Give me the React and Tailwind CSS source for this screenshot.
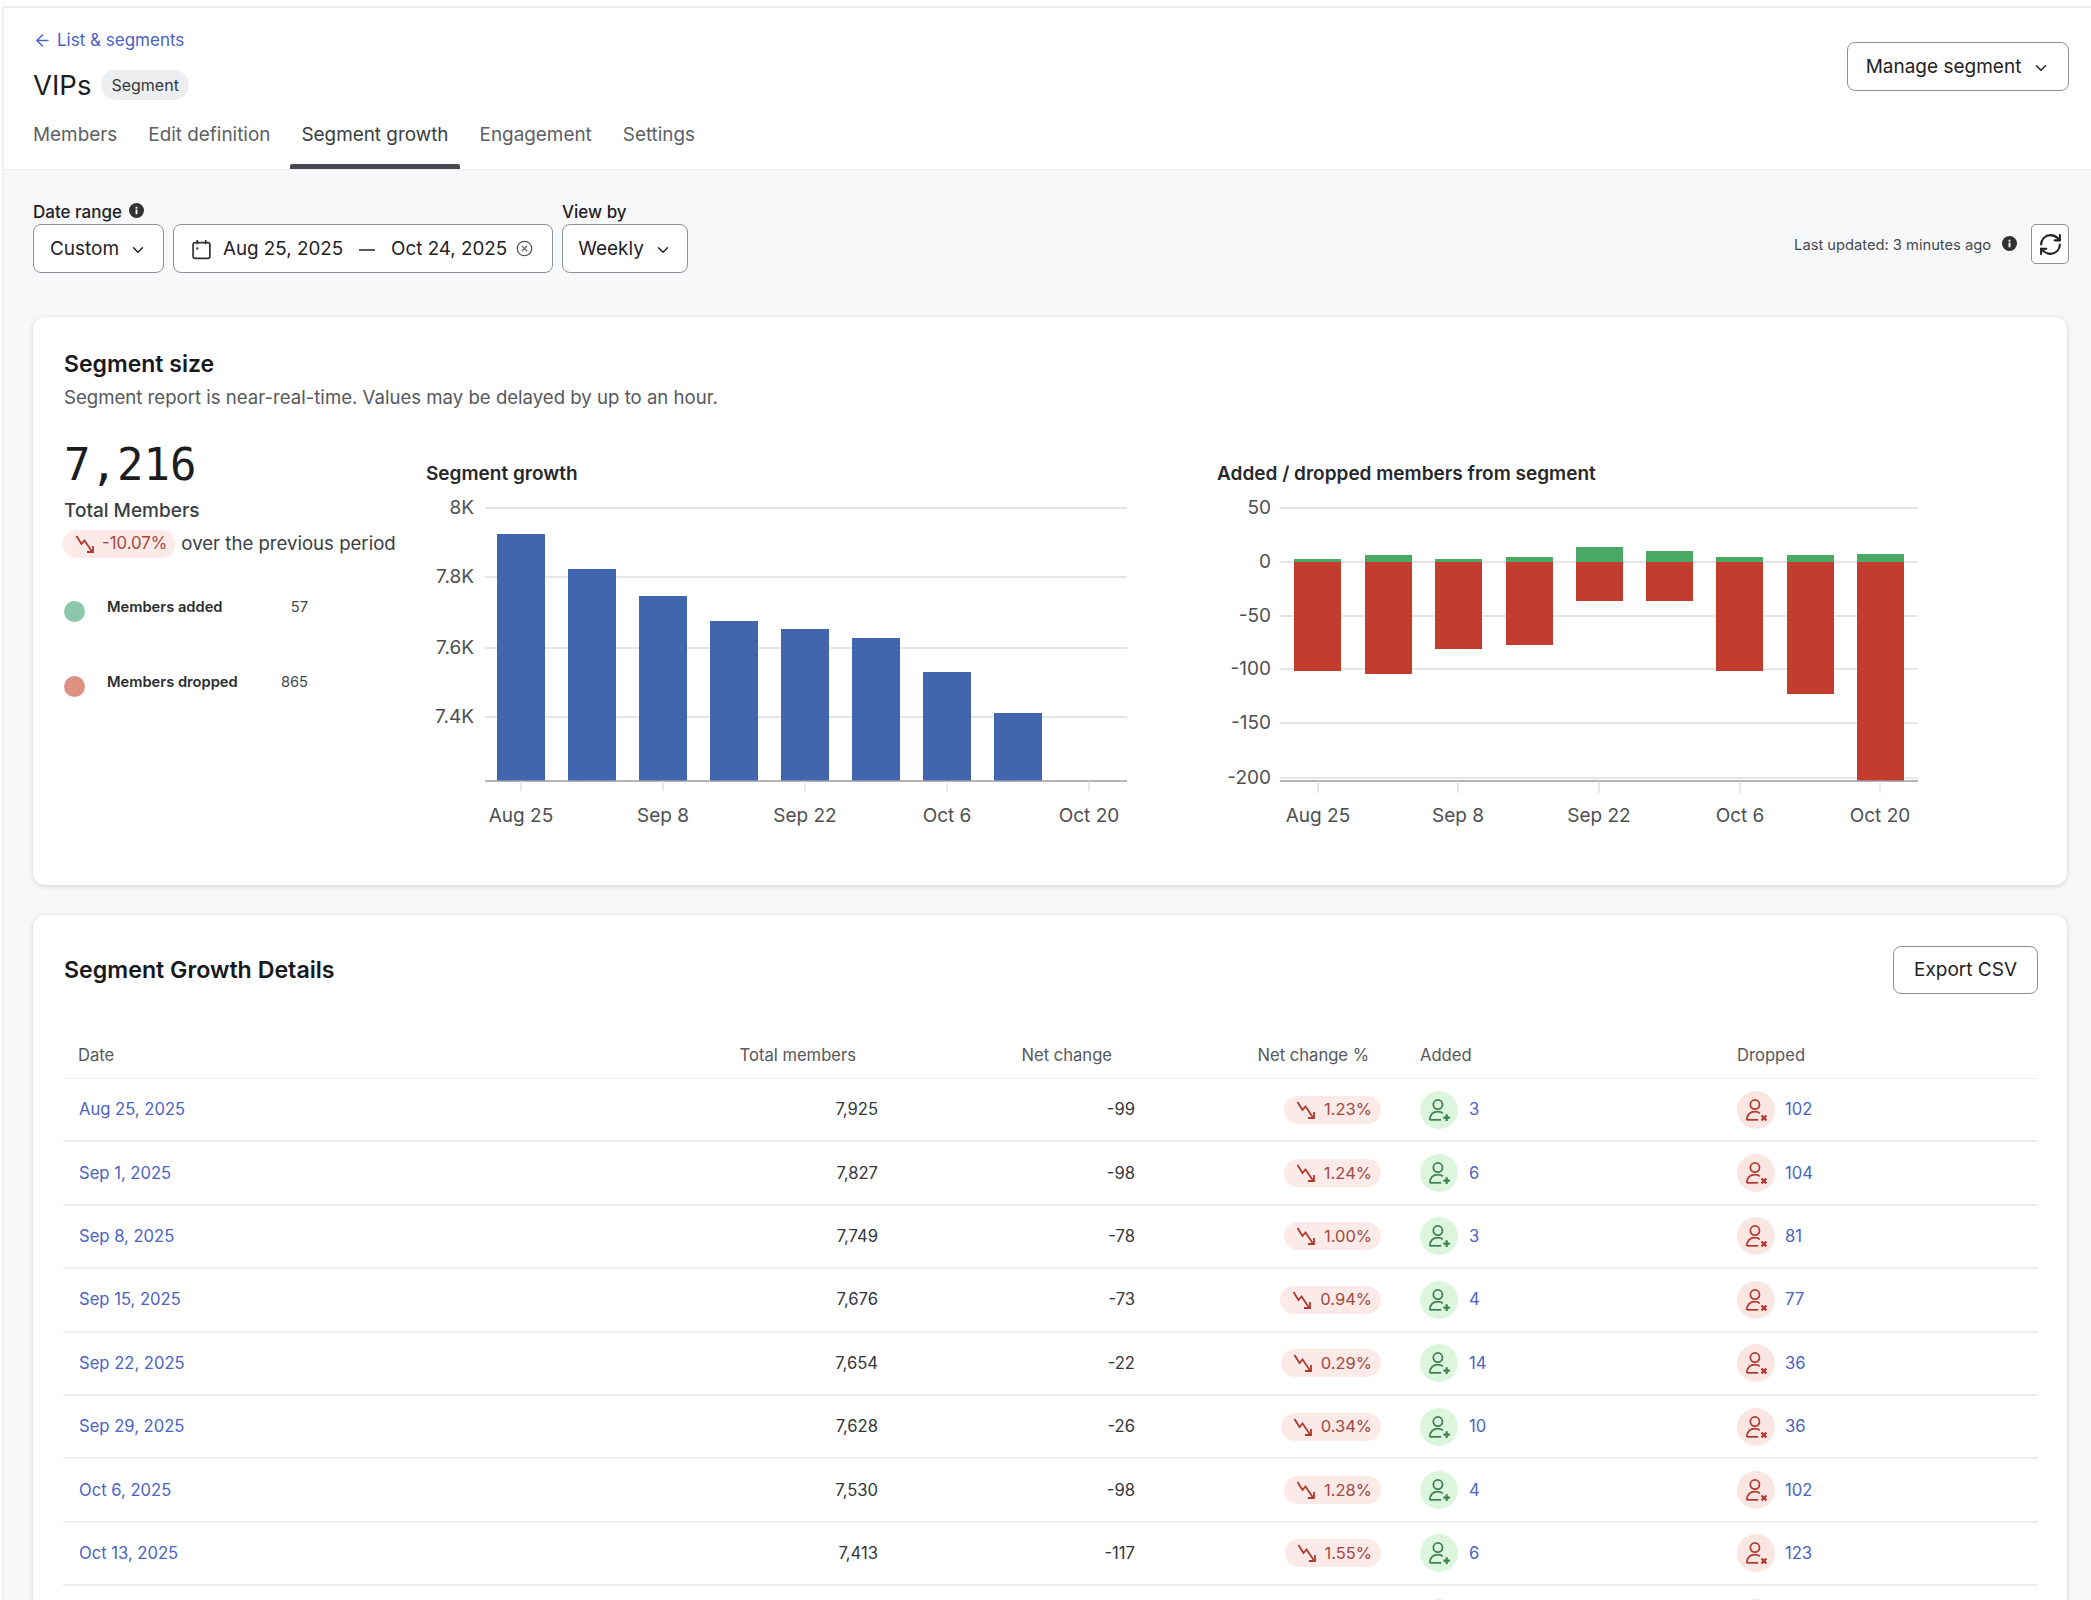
import React from "react";
import { ArrowLeft, ChevronDown, RefreshCw } from "lucide-react";

const rows = [
    { date: "Aug 25, 2025", total: "7,925", net: "-99", pct: "1.23%", added: 3, dropped: 102 },
    { date: "Sep 1, 2025", total: "7,827", net: "-98", pct: "1.24%", added: 6, dropped: 104 },
    { date: "Sep 8, 2025", total: "7,749", net: "-78", pct: "1.00%", added: 3, dropped: 81 },
    { date: "Sep 15, 2025", total: "7,676", net: "-73", pct: "0.94%", added: 4, dropped: 77 },
    { date: "Sep 22, 2025", total: "7,654", net: "-22", pct: "0.29%", added: 14, dropped: 36 },
    { date: "Sep 29, 2025", total: "7,628", net: "-26", pct: "0.34%", added: 10, dropped: 36 },
    { date: "Oct 6, 2025", total: "7,530", net: "-98", pct: "1.28%", added: 4, dropped: 102 },
    { date: "Oct 13, 2025", total: "7,413", net: "-117", pct: "1.55%", added: 6, dropped: 123 },
];

const growthBars = [
    [497, 533],
    [568, 568],
    [639, 595],
    [710, 620],
    [781, 628],
    [852, 637],
    [923, 671],
    [994, 712],
];

const changeBars = [
    [1294, 558, 670],
    [1365, 554, 673],
    [1435, 558, 648],
    [1506, 556, 644],
    [1576, 546, 600],
    [1646, 550, 600],
    [1716, 556, 670],
    [1787, 554, 693],
    [1857, 553, 780],
];

function InfoDot({ className }) {
    return (
        <svg viewBox="0 0 16 16" className={className}>
            <circle cx="8" cy="8" r="8" fill="#2f3133" />
            <rect x="7" y="7" width="2" height="5" fill="#fff" />
            <rect x="7" y="4" width="2" height="2" fill="#fff" />
        </svg>
    );
}

function TrendIcon() {
    return (
        <svg viewBox="0 0 20 20" fill="none" stroke="#b03a30" strokeWidth="1.8" className="w-[20px] h-[20px] shrink-0">
            <path d="M1.5 2 L6.5 10 L9.5 6.5 L17 17.5" />
            <path d="M12 18 H18 V12" />
        </svg>
    );
}

function ChangePill({ value }) {
    return (
        <span className="inline-flex items-center gap-[8px] h-[28px] pl-[12px] pr-[9px] rounded-full bg-[#fbeae7] text-[#a2493f] text-[16.5px]">
            <TrendIcon />
            {value}
        </span>
    );
}

function PersonBadge({ type }) {
    const added = type === "added";
    const color = added ? "#3f7f52" : "#b03a30";
    return (
        <span className={"w-[38px] h-[38px] rounded-full flex items-center justify-center shrink-0 " + (added ? "bg-[#dcf6dd]" : "bg-[#f9e6e3]")}>
            <svg viewBox="0 0 22 22" fill="none" stroke={color} strokeWidth="1.6" className="w-[24px] h-[24px]">
                <circle cx="10" cy="6" r="4.2" />
                <path d="M2.5 20 C3 15 6 12.5 10 12.5 C12 12.5 13.5 13 14.5 14" />
                <path d="M2.5 20 H13" />
                {added ? (
                    <path d="M18 15 V21 M15 18 H21" strokeWidth="2" />
                ) : (
                    <path d="M16 16 L20.5 20.5 M20.5 16 L16 20.5" strokeWidth="2" />
                )}
            </svg>
        </span>
    );
}

function SegmentGrowthChart() {
    const lines = [
        [507, "8K"],
        [576, "7.8K"],
        [647, "7.6K"],
        [716, "7.4K"],
    ];
    const ticks = [
        [521, "Aug 25"],
        [663, "Sep 8"],
        [805, "Sep 22"],
        [947, "Oct 6"],
        [1089, "Oct 20"],
    ];
    return (
        <svg viewBox="426 490 704 340" className="w-[704px] h-[340px] mt-[5px] block">
            {lines.map(([y, label]) => (
                <g key={label}>
                    <line x1="485" x2="1127" y1={y} y2={y} stroke="#dcdee0" strokeWidth="1.5" />
                    <text x="474" y={y + 6} textAnchor="end" fontSize="19" fill="#4d4f52">
                        {label}
                    </text>
                </g>
            ))}
            {growthBars.map(([x, top]) => (
                <rect key={x} x={x} y={top} width="48" height={780 - top} fill="#4166ae" />
            ))}
            <line x1="485" x2="1127" y1="780" y2="780" stroke="#9a9da0" strokeWidth="1.5" />
            {ticks.map(([x, label]) => (
                <g key={label}>
                    <line x1={x} x2={x} y1="780" y2="790" stroke="#d0d2d4" strokeWidth="1" />
                    <text x={x} y="821" textAnchor="middle" fontSize="19" fill="#4d4f52">
                        {label}
                    </text>
                </g>
            ))}
        </svg>
    );
}

function AddedDroppedChart() {
    const lines = [
        [507, "50"],
        [561, "0"],
        [615, "-50"],
        [668, "-100"],
        [722, "-150"],
        [777, "-200"],
    ];
    const ticks = [
        [1318, "Aug 25"],
        [1458, "Sep 8"],
        [1599, "Sep 22"],
        [1740, "Oct 6"],
        [1880, "Oct 20"],
    ];
    return (
        <svg viewBox="1217 490 708 340" className="w-[708px] h-[340px] mt-[5px] block">
            {lines.map(([y, label]) => (
                <g key={label}>
                    <line x1="1280" x2="1918" y1={y} y2={y} stroke="#dcdee0" strokeWidth="1.5" />
                    <text x="1271" y={y + 6} textAnchor="end" fontSize="19" fill="#4d4f52">
                        {label}
                    </text>
                </g>
            ))}
            {changeBars.map(([x, top, bottom]) => (
                <g key={x}>
                    <rect x={x} y={top} width="47" height={561 - top} fill="#4aa864" />
                    <rect x={x} y="561" width="47" height={bottom - 561} fill="#c33d2f" />
                </g>
            ))}
            <line x1="1280" x2="1918" y1="780" y2="780" stroke="#9a9da0" strokeWidth="1.5" />
            {ticks.map(([x, label]) => (
                <g key={label}>
                    <line x1={x} x2={x} y1="780" y2="792" stroke="#d0d2d4" strokeWidth="1" />
                    <text x={x} y="821" textAnchor="middle" fontSize="19" fill="#4d4f52">
                        {label}
                    </text>
                </g>
            ))}
        </svg>
    );
}

export default function App() {
    return (
        <div className="h-[1600px] overflow-hidden bg-white pt-[6px] pl-[2px] font-['Inter',sans-serif] text-[#1f2124]">
            <div className="h-full border-t-2 border-l-2 border-[#eceef0] bg-[#f7f8fa]">
                {/* header */}
                <div className="relative h-[162px] bg-white border-b border-[#e9ebed] pl-[29px]">
                    <div className="pt-[21px] flex items-center gap-[5px] text-[#4a63c4] text-[17px] leading-[22px]">
                        <ArrowLeft size={19} strokeWidth={1.8} />
                        List &amp; segments
                    </div>
                    <div className="mt-[17px] flex items-center gap-[10px]">
                        <span className="text-[27.5px] leading-[34px] text-[#1b1d20]">VIPs</span>
                        <span className="h-[30px] px-[10px] rounded-full bg-[#eceeef] text-[16px] leading-[30px] text-[#33363a]">Segment</span>
                    </div>
                    <div className="mt-[20px] flex text-[18.9px] leading-[26px] text-[#5c5f63]">
                        <span className="mr-[31px]">Members</span>
                        <span className="mr-[31px]">Edit definition</span>
                        <span className="mr-[31px] text-[#3a3d41]">Segment growth</span>
                        <span className="mr-[31px]">Engagement</span>
                        <span>Settings</span>
                    </div>
                    <div className="absolute left-[286px] bottom-0 w-[170px] h-[5px] rounded-t-[2px] bg-[#45484c]"></div>
                    <button className="absolute right-[22px] top-[34px] h-[49px] w-[222px] pt-[2px] flex items-center justify-center gap-[11px] rounded-[8px] border border-[#8d9094] bg-white text-[19px]">
                        Manage segment
                        <ChevronDown size={18} strokeWidth={2} />
                    </button>
                </div>

                {/* filters */}
                <div className="h-[147px] pl-[29px] pr-[22px] pt-[30px] flex items-start">
                    <div>
                        <div className="flex items-center gap-[7px] text-[17px] leading-[24px] font-medium h-[24px]">
                            Date range
                            <InfoDot className="w-[15px] h-[15px] -mt-[3px]" />
                        </div>
                        <div className="flex gap-[9px]">
                            <div className="w-[131px] h-[49px] pt-[2px] flex items-center justify-center gap-[10px] rounded-[8px] border border-[#8d9094] bg-white text-[19px]">
                                Custom
                                <ChevronDown size={18} strokeWidth={2} />
                            </div>
                            <div className="w-[380px] h-[49px] pt-[2px] flex items-center pl-[17px] rounded-[8px] border border-[#8d9094] bg-white text-[18.8px]">
                                <svg viewBox="0 0 20 20" fill="none" stroke="#2f3133" strokeWidth="1.6" className="w-[21px] h-[21px] shrink-0">
                                    <rect x="2" y="3.5" width="16" height="15" rx="2" />
                                    <path d="M6 1 V5 M14 1 V5" />
                                    <rect x="5" y="8" width="2" height="2" fill="#2f3133" stroke="none" />
                                </svg>
                                <span className="ml-[11px]">Aug 25, 2025</span>
                                <span className="ml-[16px] w-[16px] h-[2px] bg-[#55585c]"></span>
                                <span className="ml-[16px]">Oct 24, 2025</span>
                                <svg viewBox="0 0 16 16" fill="none" stroke="#55585c" strokeWidth="1.2" className="w-[17px] h-[17px] ml-[9px] -mt-[2px] shrink-0">
                                    <circle cx="8" cy="8" r="6.8" />
                                    <path d="M5.5 5.5 L10.5 10.5 M10.5 5.5 L5.5 10.5" />
                                </svg>
                            </div>
                        </div>
                    </div>
                    <div className="ml-[9px]">
                        <div className="text-[17px] leading-[24px] h-[24px] font-medium">View by</div>
                        <div className="w-[126px] h-[49px] pt-[2px] flex items-center justify-center gap-[10px] rounded-[8px] border border-[#8d9094] bg-white text-[19px]">
                            Weekly
                            <ChevronDown size={18} strokeWidth={2} />
                        </div>
                    </div>
                    <div className="ml-auto pt-[24px] flex items-center h-[64px]">
                        <span className="text-[14.7px] text-[#45484c] pt-[2px]">Last updated: 3 minutes ago</span>
                        <InfoDot className="w-[15px] h-[15px] ml-[11px] -mt-[2px]" />
                        <span className="ml-[14px] w-[38px] h-[40px] flex items-center justify-center rounded-[5px] border border-[#8d9094] bg-white">
                            <RefreshCw size={25} strokeWidth={2} />
                        </span>
                    </div>
                </div>

                {/* segment size card */}
                <div className="ml-[29px] mr-[24px] h-[568px] rounded-[12px] bg-white shadow-[0_1px_5px_rgba(0,0,0,0.16)] pt-[30px] pl-[31px]">
                    <div className="text-[23px] leading-[34px] font-semibold text-[#17191c]">Segment size</div>
                    <div className="text-[18.6px] leading-[26px] mt-[3px] text-[#55585c]">
                        Segment report is near-real-time. Values may be delayed by up to an hour.
                    </div>
                    <div className="flex mt-[25px]">
                        <div className="w-[362px] shrink-0">
                            <div className="font-['DejaVu_Sans_Mono',monospace] text-[44px] leading-[60px] text-[#1b1d20]">7,216</div>
                            <div className="mt-[4px] text-[19px] leading-[24px] font-medium text-[#3a3d41]">Total Members</div>
                            <div className="mt-[7px] flex items-center gap-[6px] -ml-[1px]">
                                <span className="inline-flex items-center gap-[7px] h-[28px] pl-[12px] pr-[8px] rounded-full bg-[#fbeae7] text-[#a2493f] text-[16.8px]">
                                    <TrendIcon />
                                    -10.07%
                                </span>
                                <span className="text-[18.6px] text-[#3a3d41]">over the previous period</span>
                            </div>
                            <div className="mt-[39px] flex w-[244px] h-[20px] text-[14.7px] leading-[20px]">
                                <span className="w-[21px] h-[21px] mt-[4px] rounded-full bg-[#8cc7ad]"></span>
                                <span className="ml-[22px] font-semibold text-[#2a2c2f]">Members added</span>
                                <span className="ml-auto text-[#45484c]">57</span>
                            </div>
                            <div className="mt-[55px] flex w-[244px] h-[20px] text-[14.7px] leading-[20px]">
                                <span className="w-[21px] h-[21px] mt-[4px] rounded-full bg-[#dc9183]"></span>
                                <span className="ml-[22px] font-semibold text-[#2a2c2f]">Members dropped</span>
                                <span className="ml-auto text-[#45484c]">865</span>
                            </div>
                        </div>
                        <div className="w-[791px] shrink-0 pt-[27px]">
                            <div className="text-[19px] leading-[24px] font-semibold text-[#26282b]">Segment growth</div>
                            <SegmentGrowthChart />
                        </div>
                        <div className="w-[708px] shrink-0 pt-[27px]">
                            <div className="text-[19px] leading-[24px] font-semibold text-[#26282b]">Added / dropped members from segment</div>
                            <AddedDroppedChart />
                        </div>
                    </div>
                </div>

                {/* details card */}
                <div className="ml-[29px] mr-[24px] mt-[30px] rounded-[12px] bg-white shadow-[0_1px_5px_rgba(0,0,0,0.16)] pt-[31px] pl-[30px] pr-[29px] pb-[20px]">
                    <div className="flex items-center justify-between pl-[1px]">
                        <div className="text-[23.2px] font-semibold text-[#17191c]">Segment Growth Details</div>
                        <button className="w-[145px] h-[48px] pt-[1px] rounded-[8px] border border-[#8d9094] bg-white text-[19px]">Export CSV</button>
                    </div>
                    <div className="mt-[38px] grid grid-cols-[600px_231px_257px_253px_317px_1fr] h-[47px] items-center border-b border-[#eceef0] text-[16.6px] text-[#55585c]">
                        <div className="pl-[15px]">Date</div>
                        <div className="text-right pr-[38px]">Total members</div>
                        <div className="text-right pr-[39px]">Net change</div>
                        <div className="text-right pr-[35px]">Net change %</div>
                        <div className="pl-[16px]">Added</div>
                        <div className="pl-[16px]">Dropped</div>
                    </div>
                    {rows.map((row) => (
                        <div key={row.date} className="grid grid-cols-[600px_231px_257px_253px_317px_1fr] h-[63.4px] items-center border-b-2 border-[#eceef0] text-[16.6px]">
                            <div className="pl-[16px] text-[#4a63c4]">{row.date}</div>
                            <div className="text-right pr-[16px] text-[#33363a]">{row.total}</div>
                            <div className="text-right pr-[16px] text-[#33363a]">{row.net}</div>
                            <div className="pr-[23px] flex justify-end">
                                <ChangePill value={row.pct} />
                            </div>
                            <div className="pl-[16px] flex items-center gap-[11px] text-[#4a63c4]">
                                <PersonBadge type="added" />
                                {row.added}
                            </div>
                            <div className="pl-[16px] flex items-center gap-[10px] text-[#4a63c4]">
                                <PersonBadge type="dropped" />
                                {row.dropped}
                            </div>
                        </div>
                    ))}
                    {/* next row, only the tops of its badges are on screen */}
                    <div className="grid grid-cols-[600px_231px_257px_253px_317px_1fr] h-[63.4px] items-center">
                        <div className="col-start-5 pl-[16px]">
                            <PersonBadge type="added" />
                        </div>
                        <div className="pl-[16px]">
                            <PersonBadge type="dropped" />
                        </div>
                    </div>
                </div>
            </div>
        </div>
    );
}
